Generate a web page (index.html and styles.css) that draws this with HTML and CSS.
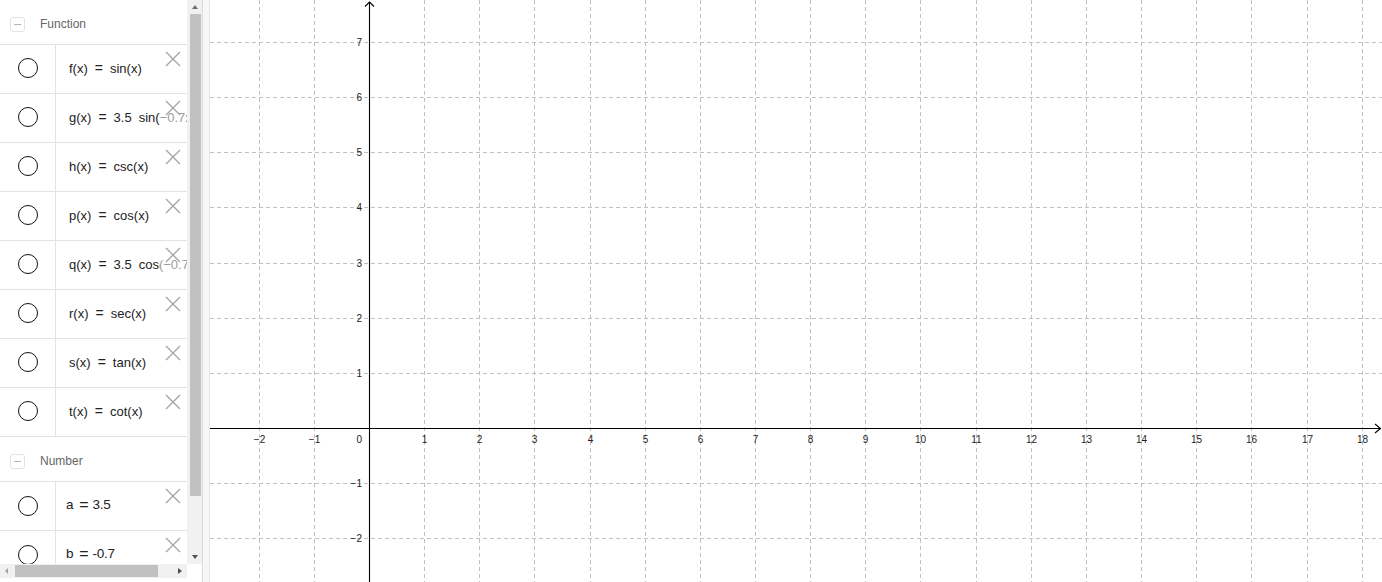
FILE: index.html
```html
<!DOCTYPE html>
<html>
<head>
<meta charset="utf-8">
<link rel="stylesheet" href="styles.css">
</head>
<body>
<div class="app">
  <div class="panel">
    <div class="list">
      <div class="section-head"><span class="toggle"><i></i></span><span class="sec-title">Function</span></div>
      <div class="row"><div class="marble"><span class="dot"></span></div><div class="expr">f(x)<span class="eq">=</span>sin(x)</div><span class="fade"></span><svg class="del" viewBox="0 0 16 16"><path d="M1 1L15 15M15 1L1 15"/></svg></div>
      <div class="row"><div class="marble"><span class="dot"></span></div><div class="expr">g(x)<span class="eq">=</span>3.5<span class="sp"></span>sin(−0.7x)</div><span class="fade"></span><svg class="del" viewBox="0 0 16 16"><path d="M1 1L15 15M15 1L1 15"/></svg></div>
      <div class="row"><div class="marble"><span class="dot"></span></div><div class="expr">h(x)<span class="eq">=</span>csc(x)</div><span class="fade"></span><svg class="del" viewBox="0 0 16 16"><path d="M1 1L15 15M15 1L1 15"/></svg></div>
      <div class="row"><div class="marble"><span class="dot"></span></div><div class="expr">p(x)<span class="eq">=</span>cos(x)</div><span class="fade"></span><svg class="del" viewBox="0 0 16 16"><path d="M1 1L15 15M15 1L1 15"/></svg></div>
      <div class="row"><div class="marble"><span class="dot"></span></div><div class="expr">q(x)<span class="eq">=</span>3.5<span class="sp"></span>cos(−0.7x)</div><span class="fade"></span><svg class="del" viewBox="0 0 16 16"><path d="M1 1L15 15M15 1L1 15"/></svg></div>
      <div class="row"><div class="marble"><span class="dot"></span></div><div class="expr">r(x)<span class="eq">=</span>sec(x)</div><span class="fade"></span><svg class="del" viewBox="0 0 16 16"><path d="M1 1L15 15M15 1L1 15"/></svg></div>
      <div class="row"><div class="marble"><span class="dot"></span></div><div class="expr">s(x)<span class="eq">=</span>tan(x)</div><span class="fade"></span><svg class="del" viewBox="0 0 16 16"><path d="M1 1L15 15M15 1L1 15"/></svg></div>
      <div class="row"><div class="marble"><span class="dot"></span></div><div class="expr">t(x)<span class="eq">=</span>cot(x)</div><span class="fade"></span><svg class="del" viewBox="0 0 16 16"><path d="M1 1L15 15M15 1L1 15"/></svg></div>
      <div class="section-head"><span class="toggle"><i></i></span><span class="sec-title">Number</span></div>
      <div class="row"><div class="marble num-marble"><span class="dot"></span></div><div class="expr num">a<span class="eq">=</span>3.5</div><svg class="del" viewBox="0 0 16 16"><path d="M1 1L15 15M15 1L1 15"/></svg></div>
      <div class="row"><div class="marble num-marble"><span class="dot"></span></div><div class="expr num">b<span class="eq">=</span>-0.7</div><svg class="del" viewBox="0 0 16 16"><path d="M1 1L15 15M15 1L1 15"/></svg></div>
    </div>
    <div class="vscroll"><span class="arr-up"></span><span class="vthumb"></span><span class="vspace"></span><span class="arr-down"></span></div>
    <div class="hscroll"><div class="htrack"><span class="arr-left"></span><span class="hthumb"></span><span class="arr-right"></span></div></div>
    <div class="corner"></div>
  </div>
  <div class="divider"></div>
  <div class="graphics">
    <svg class="plot" width="1172" height="582" viewBox="0 0 1172 582">
      <g class="grid">
        <line x1="49.5" y1="0" x2="49.5" y2="582"/>
        <line x1="104.5" y1="0" x2="104.5" y2="582"/>
        <line x1="214.5" y1="0" x2="214.5" y2="582"/>
        <line x1="269.5" y1="0" x2="269.5" y2="582"/>
        <line x1="324.5" y1="0" x2="324.5" y2="582"/>
        <line x1="380.5" y1="0" x2="380.5" y2="582"/>
        <line x1="435.5" y1="0" x2="435.5" y2="582"/>
        <line x1="490.5" y1="0" x2="490.5" y2="582"/>
        <line x1="545.5" y1="0" x2="545.5" y2="582"/>
        <line x1="600.5" y1="0" x2="600.5" y2="582"/>
        <line x1="655.5" y1="0" x2="655.5" y2="582"/>
        <line x1="710.5" y1="0" x2="710.5" y2="582"/>
        <line x1="766.5" y1="0" x2="766.5" y2="582"/>
        <line x1="821.5" y1="0" x2="821.5" y2="582"/>
        <line x1="876.5" y1="0" x2="876.5" y2="582"/>
        <line x1="931.5" y1="0" x2="931.5" y2="582"/>
        <line x1="986.5" y1="0" x2="986.5" y2="582"/>
        <line x1="1041.5" y1="0" x2="1041.5" y2="582"/>
        <line x1="1097.5" y1="0" x2="1097.5" y2="582"/>
        <line x1="1152.5" y1="0" x2="1152.5" y2="582"/>
        <line x1="0" y1="42.5" x2="1172" y2="42.5"/>
        <line x1="0" y1="97.5" x2="1172" y2="97.5"/>
        <line x1="0" y1="152.5" x2="1172" y2="152.5"/>
        <line x1="0" y1="207.5" x2="1172" y2="207.5"/>
        <line x1="0" y1="263.5" x2="1172" y2="263.5"/>
        <line x1="0" y1="318.5" x2="1172" y2="318.5"/>
        <line x1="0" y1="373.5" x2="1172" y2="373.5"/>
        <line x1="0" y1="483.5" x2="1172" y2="483.5"/>
        <line x1="0" y1="538.5" x2="1172" y2="538.5"/>
      </g>
      <g class="axes">
        <line x1="0" y1="428.5" x2="1171" y2="428.5"/>
        <polyline points="1165,424 1170.5,428.5 1165,433"/>
        <line x1="159.5" y1="2" x2="159.5" y2="582"/>
        <polyline points="155,6.5 159.5,2 164,6.5"/>
      </g>
      <g class="xlabels">
        <text x="49.5" y="443">−2</text>
        <text x="104.5" y="443">−1</text>
        <text x="214.5" y="443">1</text>
        <text x="269.5" y="443">2</text>
        <text x="324.5" y="443">3</text>
        <text x="380.5" y="443">4</text>
        <text x="435.5" y="443">5</text>
        <text x="490.5" y="443">6</text>
        <text x="545.5" y="443">7</text>
        <text x="600.5" y="443">8</text>
        <text x="655.5" y="443">9</text>
        <text x="710.5" y="443">10</text>
        <text x="766.5" y="443">11</text>
        <text x="821.5" y="443">12</text>
        <text x="876.5" y="443">13</text>
        <text x="931.5" y="443">14</text>
        <text x="986.5" y="443">15</text>
        <text x="1041.5" y="443">16</text>
        <text x="1097.5" y="443">17</text>
        <text x="1152.5" y="443">18</text>
      </g>
      <g class="ylabels">
        <text x="152" y="443">0</text>
        <text x="152" y="46">7</text>
        <text x="152" y="101">6</text>
        <text x="152" y="156">5</text>
        <text x="152" y="211">4</text>
        <text x="152" y="267">3</text>
        <text x="152" y="322">2</text>
        <text x="152" y="377">1</text>
        <text x="152" y="487">−1</text>
        <text x="152" y="542">−2</text>
      </g>
    </svg>
  </div>
</div>
</body>
</html>
```

FILE: styles.css
```css
html, body {
  margin: 0;
  padding: 0;
  background: #fff;
}
body {
  font-family: "Liberation Sans", Arial, sans-serif;
  color: #222;
}
.app {
  display: flex;
  width: 1382px;
  height: 582px;
  overflow: hidden;
}
.panel {
  flex: none;
  width: 202px;
  display: grid;
  grid-template-columns: 187px 15px;
  grid-template-rows: 564px 18px;
}
.list {
  overflow: hidden;
  background: #fff;
}
.section-head {
  height: 40px;
  padding-top: 4px;
  padding-left: 10px;
  border-bottom: 1px solid #e3e3e3;
  display: flex;
  align-items: center;
}
.toggle {
  width: 13px;
  height: 13px;
  border: 1px solid #e2e2e2;
  border-radius: 3px;
  display: flex;
  align-items: center;
  justify-content: center;
  margin-right: 15px;
}
.toggle i {
  display: block;
  width: 7px;
  height: 1px;
  background: #b5b5b5;
}
.sec-title {
  font-size: 12px;
  color: #666;
}
.row {
  position: relative;
  height: 48px;
  border-bottom: 1px solid #e3e3e3;
  display: flex;
  align-items: stretch;
}
.marble {
  flex: none;
  width: 56px;
  border-right: 1px solid #e3e3e3;
  display: flex;
  align-items: center;
  justify-content: center;
  padding-bottom: 2px;
  box-sizing: border-box;
}
.num-marble {
  padding-bottom: 1px;
}
.dot {
  width: 18px;
  height: 18px;
  border: 1.3px solid #111;
  border-radius: 50%;
  box-sizing: content-box;
}
.expr {
  display: flex;
  align-items: center;
  padding-left: 13px;
  padding-bottom: 2px;
  font-size: 13px;
  white-space: nowrap;
  color: #222;
}
.expr .eq {
  font-size: 14px;
  margin: 0 7px 0 7px;
}
.expr .sp {
  display: inline-block;
  width: 7px;
}
.expr.num {
  padding-left: 10px;
  padding-bottom: 3px;
  font-size: 13.5px;
  letter-spacing: -0.2px;
}
.expr.num .eq {
  font-size: 16px;
  margin: 0 4px 0 6px;
}
.fade {
  position: absolute;
  left: 160px;
  top: 0;
  width: 27px;
  height: 100%;
  background: rgba(255, 255, 255, 0.55);
}
.del {
  position: absolute;
  left: 165px;
  top: 6px;
  width: 16px;
  height: 16px;
  fill: none;
  stroke: #a6a6a6;
  stroke-width: 1.4;
}
.vscroll {
  background: #f1f1f1;
  display: flex;
  flex-direction: column;
  align-items: center;
  padding: 5px 0 5px;
  box-sizing: border-box;
}
.arr-up {
  width: 0;
  height: 0;
  border-left: 3.5px solid transparent;
  border-right: 3.5px solid transparent;
  border-bottom: 4px solid #6e6e6e;
  margin-left: 1px;
}
.arr-down {
  width: 0;
  height: 0;
  border-left: 3.5px solid transparent;
  border-right: 3.5px solid transparent;
  border-top: 4px solid #505050;
  margin-left: 1px;
}
.vthumb {
  margin-top: 5px;
  width: 11px;
  height: 482px;
  background: #c1c1c1;
  margin-left: 2px;
}
.vspace {
  flex: 1;
}
.hscroll {
  background: #fff;
}
.htrack {
  height: 14px;
  background: #f1f1f1;
  display: flex;
  align-items: center;
  padding-left: 5px;
}
.arr-left {
  width: 0;
  height: 0;
  border-top: 3.5px solid transparent;
  border-bottom: 3.5px solid transparent;
  border-right: 3.5px solid #a3a3a3;
}
.hthumb {
  margin-left: 6.5px;
  width: 143px;
  height: 12px;
  background: #c1c1c1;
}
.arr-right {
  margin-left: 20px;
  width: 0;
  height: 0;
  border-top: 3.5px solid transparent;
  border-bottom: 3.5px solid transparent;
  border-left: 4px solid #505050;
}
.corner {
  background: #fff;
}
.divider {
  flex: none;
  width: 6px;
  border-left: 1px solid #dcdcdc;
  border-right: 1px solid #e4e4e4;
  background: #f7f7f7;
}
.graphics {
  flex: 1;
  overflow: hidden;
  background: #fff;
}
.plot {
  display: block;
}
.grid line {
  stroke: #c0c0c0;
  stroke-width: 1;
  stroke-dasharray: 4 3;
}
.axes line, .axes polyline {
  stroke: #000;
  stroke-width: 1.1;
  fill: none;
}
.xlabels text, .ylabels text {
  font-family: "Liberation Sans", Arial, sans-serif;
  font-size: 10px;
  fill: #222;
}
.xlabels text {
  text-anchor: middle;
}
.ylabels text {
  text-anchor: end;
}
```
